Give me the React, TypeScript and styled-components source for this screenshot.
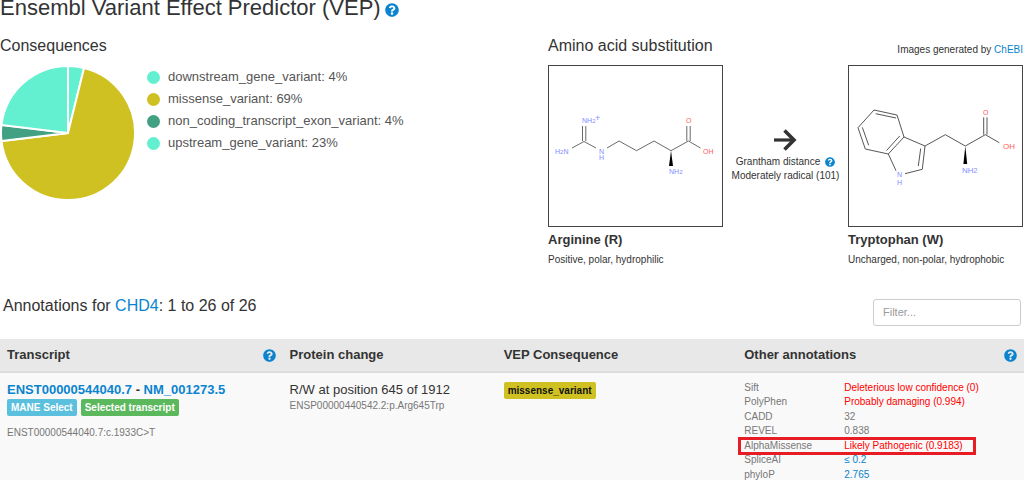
import React from "react";
import styled, { createGlobalStyle } from "styled-components";
import { FaQuestionCircle } from "react-icons/fa";

const GlobalStyle = createGlobalStyle`
  * { box-sizing: border-box; }
  body {
    margin: 0;
    background: #fff;
    color: #333;
    font-family: "Liberation Sans", Arial, sans-serif;
    font-size: 13px;
    line-height: 18px;
    overflow-x: hidden;
  }
  h1, h2, h3, p, ul, dl, dd { margin: 0; padding: 0; font-weight: 400; }
`;

const Link = styled.a`
  color: #0a84cf;
  text-decoration: none;
`;

const HelpButton = styled.button<{ $size: number }>`
  display: inline-flex;
  flex: none;
  padding: 0;
  border: 0;
  background: none;
  color: #0a84cf;
  font-size: ${(p) => p.$size}px;
  cursor: pointer;
`;

const Help = ({ size, label }: { size: number; label: string }) => (
  <HelpButton type="button" $size={size} aria-label={label}>
    <FaQuestionCircle />
  </HelpButton>
);

const Title = styled.h1`
  display: flex;
  align-items: center;
  gap: 4px;
  height: 20px;
  font-size: 22px;
  line-height: 16px;
  padding-bottom: 4px;
`;

const TitleHelp = styled.span`
  display: flex;
  padding-top: 4px;
`;

const Overview = styled.section`
  display: grid;
  grid-template-columns: 548fr 476fr;
  padding-top: 16px;
`;

const SectionHeading = styled.h2`
  font-size: 16px;
  line-height: 20px;
`;

const ChartRow = styled.div`
  display: flex;
  gap: 11px;
  padding-top: 10px;
`;

const Legend = styled.ul`
  list-style: none;
`;

const LegendItem = styled.li`
  display: flex;
  align-items: center;
  gap: 8px;
  height: 22px;
  color: #555;
`;

const Dot = styled.span<{ $color: string }>`
  width: 13px;
  height: 13px;
  border-radius: 50%;
  background: ${(p) => p.$color};
`;

const AminoHeader = styled.div`
  display: flex;
  justify-content: space-between;
  align-items: flex-end;
  height: 29px;
`;

const AminoHeading = styled(SectionHeading)`
  align-self: flex-start;
`;

const Credit = styled.p`
  font-size: 10px;
  line-height: 14px;
  padding: 0 1px 8px 0;
`;

const AminoRow = styled.div`
  display: flex;
  justify-content: space-between;
  padding-right: 1px;
`;

const AminoCard = styled.figure`
  margin: 0;
  width: 175px;
`;

const Frame = styled.div`
  height: 162px;
  border: 1px solid #444;

  svg { display: block; }
`;

const AminoName = styled.h3`
  padding-top: 4px;
  font-size: 13px;
  font-weight: 700;
  line-height: 18px;
`;

const AminoTraits = styled.p`
  padding-top: 3px;
  font-size: 10px;
  line-height: 16px;
`;

const Distance = styled.div`
  display: flex;
  flex-direction: column;
  align-items: center;
  padding-top: 63px;
  font-size: 10px;
  line-height: 14px;
`;

const DistanceLine = styled.span`
  display: flex;
  align-items: center;
  gap: 5px;
  white-space: nowrap;

  &:first-of-type { padding-top: 3px; }
`;

const Toolbar = styled.div`
  display: flex;
  justify-content: space-between;
  align-items: center;
  padding: 28px 3px 11px;
`;

const ListHeading = styled(SectionHeading)`
  padding-bottom: 12px;
`;

const FilterInput = styled.input`
  width: 148px;
  height: 27px;
  padding: 0 9px;
  border: 1px solid #ccc;
  border-radius: 3px;
  font: 11px "Liberation Sans", Arial, sans-serif;
  color: #555;

  &::placeholder { color: #999; }
`;

const Table = styled.table`
  width: 100%;
  table-layout: fixed;
  border-collapse: separate;
  border-spacing: 0;
  background: #f9f9f9;
`;

const Col = styled.col<{ $share: number }>`
  width: ${(p) => p.$share / 10}%;
`;

const HeadCell = styled.th`
  height: 34px;
  padding: 0 7px;
  background: #e8e8e8;
  border-bottom: 2px solid #ddd;
  text-align: left;
`;

const HeadContent = styled.div`
  display: flex;
  justify-content: space-between;
  align-items: center;
`;

const Cell = styled.td`
  padding: 8px 7px 0;
  vertical-align: top;
`;

const TranscriptTitle = styled.div`
  font-weight: 700;
`;

const Tags = styled.div`
  display: flex;
  gap: 4px;
`;

const Tag = styled.span<{ $bg: string; $fg?: string }>`
  display: inline-block;
  height: 17px;
  padding: 0 4px;
  border-radius: 2px;
  background: ${(p) => p.$bg};
  color: ${(p) => p.$fg ?? "#fff"};
  font-size: 10px;
  font-weight: 700;
  line-height: 17px;
`;

const Muted = styled.div<{ $gap?: number }>`
  padding-top: ${(p) => p.$gap ?? 0}px;
  color: #777;
  font-size: 10px;
  line-height: 14px;
`;

const Scores = styled.dl`
  font-size: 10px;
  color: #777;
`;

const Score = styled.div`
  position: relative;
  display: grid;
  grid-template-columns: 100px 1fr;
  height: 14px;
  line-height: 14px;
  white-space: nowrap;

  &:nth-child(even) { height: 15px; }
`;

const ScoreValue = styled.dd<{ $tone?: string }>`
  color: ${(p) => p.$tone ?? "inherit"};
`;

const Highlight = styled.span`
  position: absolute;
  top: -2px;
  left: -6px;
  width: 238px;
  height: 18px;
  border: 3px solid #e81c24;
`;

const AtomLabel = styled.text<{ $color: string }>`
  fill: ${(p) => p.$color};
  stroke: none;
  font-family: "Liberation Sans", Arial, sans-serif;
`;

const BLUE = "#7f8cff";
const RED = "#ff5a5a";
const MINT = "#62f0d0";
const MUSTARD = "#d0c122";
const GREEN = "#43a183";

const consequences = [
  { name: "downstream_gene_variant", count: 1, percent: 4, color: MINT },
  { name: "missense_variant", count: 18, percent: 69, color: MUSTARD },
  { name: "non_coding_transcript_exon_variant", count: 1, percent: 4, color: GREEN },
  { name: "upstream_gene_variant", count: 6, percent: 23, color: MINT },
];

const Pie = () => {
  const total = consequences.reduce((sum, c) => sum + c.count, 0);
  const point = (n: number) => {
    const a = (n / total) * 2 * Math.PI;
    return `${68 + 67 * Math.sin(a)} ${67 - 67 * Math.cos(a)}`;
  };
  let start = 0;
  return (
    <svg width="136" height="134" role="img" aria-label="Consequences pie chart">
      {consequences.map((c) => {
        const from = start;
        start += c.count;
        const large = c.count > total / 2 ? 1 : 0;
        return (
          <path
            key={c.name}
            d={`M68 67 L${point(from)} A67 67 0 ${large} 1 ${point(start)} Z`}
            fill={c.color}
            stroke="#fff"
            strokeWidth="2"
          />
        );
      })}
    </svg>
  );
};

interface AtomProps {
  x: number;
  y: number;
  text: string;
  color: string;
  size?: number;
}

/* Digits in an atom label are drawn smaller, as subscripts. */
const Atom = ({ x, y, text, color, size = 7 }: AtomProps) => (
  <AtomLabel x={x} y={y} $color={color} fontSize={size}>
    {text.split(/(\d)/).map((part, i) => (
      <tspan key={i} fontSize={/\d/.test(part) ? size - 1 : size}>
        {part}
      </tspan>
    ))}
  </AtomLabel>
);

const Arginine = () => (
  <svg width="173" height="160" viewBox="2 1 173 160" fill="none" stroke="#444" strokeWidth="0.8" role="img" aria-label="Arginine structure">
    <path d="M35.5 61V76M38.8 61V76M37 76.5L25 83M37 76.5L49 83M60 83L72 76L89.5 85.7L107 76L124 85.7L141.5 76L153.5 83M139.8 61V76M143.2 61V76" />
    <path d="M124 85.7L126 101H122Z" fill="#000" stroke="none" />
    <Atom x={35} y={58} text="NH2" color={BLUE} />
    <Atom x={48} y={56} text="+" color={BLUE} size={9} />
    <Atom x={8} y={89} text="H2N" color={BLUE} />
    <Atom x={52} y={89} text="N" color={BLUE} />
    <Atom x={52} y={95} text="H" color={BLUE} />
    <Atom x={139} y={58} text="O" color={RED} />
    <Atom x={156} y={89} text="OH" color={RED} />
    <Atom x={122} y={109} text="NH2" color={BLUE} />
  </svg>
);

const Tryptophan = () => (
  <svg width="173" height="160" viewBox="1 1 173 160" fill="none" stroke="#444" strokeWidth="0.9" role="img" aria-label="Tryptophan structure">
    <path d="M26 45L49 50L56 72L40.3 89L17.3 84L10 62.7ZM27.7 48.7L48 53M14.3 62.3L20.7 80.3M51.7 71L38.5 85.5" />
    <path d="M56 72L77 81L74.3 104.3L57 108.7M72.7 83.5L70.3 101M40.3 89L48 105.7M77 81L97.3 69.7L117.3 81L137.3 69.7L151.3 77.7M135.7 52.3V69.7M139 52.3V69.7" />
    <path d="M117.3 81L119.2 99H115.4Z" fill="#000" stroke="none" />
    <Atom x={49} y={112} text="N" color={BLUE} />
    <Atom x={49} y={120} text="H" color={BLUE} />
    <Atom x={135} y={50} text="O" color={RED} />
    <Atom x={155} y={84} text="OH" color={RED} size={8} />
    <Atom x={114} y={108} text="NH2" color={BLUE} size={8} />
  </svg>
);

const Arrow = () => (
  <svg width="24" height="24" viewBox="0 0 24 24" fill="none" stroke="#333" aria-hidden="true">
    <path d="M1 12H20" strokeWidth="3.2" />
    <path d="M11.5 2.5L21 12L11.5 21.5" strokeWidth="3.6" />
  </svg>
);

const scores = [
  { name: "Sift", value: "Deleterious low confidence (0)", tone: "#f00" },
  { name: "PolyPhen", value: "Probably damaging (0.994)", tone: "#f00" },
  { name: "CADD", value: "32" },
  { name: "REVEL", value: "0.838" },
  { name: "AlphaMissense", value: "Likely Pathogenic (0.9183)", tone: "#f00", highlighted: true },
  { name: "SpliceAI", value: "≤ 0.2", tone: "#0a84cf" },
  { name: "phyloP", value: "2.765", tone: "#0a84cf" },
];

export default function App() {
  return (
    <main>
      <GlobalStyle />
      <Title>
        Ensembl Variant Effect Predictor (VEP)
        <TitleHelp>
          <Help size={14} label="About VEP" />
        </TitleHelp>
      </Title>
      <Overview>
        <div>
          <SectionHeading>Consequences</SectionHeading>
          <ChartRow>
            <Pie />
            <Legend>
              {consequences.map((c) => (
                <LegendItem key={c.name}>
                  <Dot $color={c.color} />
                  {c.name}: {c.percent}%
                </LegendItem>
              ))}
            </Legend>
          </ChartRow>
        </div>
        <div>
          <AminoHeader>
            <AminoHeading>Amino acid substitution</AminoHeading>
            <Credit>
              Images generated by <Link href="#chebi">ChEBI</Link>
            </Credit>
          </AminoHeader>
          <AminoRow>
            <AminoCard>
              <Frame>
                <Arginine />
              </Frame>
              <AminoName>Arginine (R)</AminoName>
              <AminoTraits>Positive, polar, hydrophilic</AminoTraits>
            </AminoCard>
            <Distance>
              <Arrow />
              <DistanceLine>
                Grantham distance <Help size={10} label="About Grantham distance" />
              </DistanceLine>
              <DistanceLine>Moderately radical (101)</DistanceLine>
            </Distance>
            <AminoCard>
              <Frame>
                <Tryptophan />
              </Frame>
              <AminoName>Tryptophan (W)</AminoName>
              <AminoTraits>Uncharged, non-polar, hydrophobic</AminoTraits>
            </AminoCard>
          </AminoRow>
        </div>
      </Overview>
      <Toolbar>
        <ListHeading>
          Annotations for <Link href="#chd4">CHD4</Link>: 1 to 26 of 26
        </ListHeading>
        <FilterInput type="text" placeholder="Filter..." aria-label="Filter annotations" />
      </Toolbar>
      <Table>
        <colgroup>
          <Col $share={276} />
          <Col $share={209} />
          <Col $share={235} />
          <Col $share={280} />
        </colgroup>
        <thead>
          <tr>
            <HeadCell>
              <HeadContent>
                Transcript <Help size={13} label="About transcripts" />
              </HeadContent>
            </HeadCell>
            <HeadCell>Protein change</HeadCell>
            <HeadCell>VEP Consequence</HeadCell>
            <HeadCell>
              <HeadContent>
                Other annotations <Help size={13} label="About other annotations" />
              </HeadContent>
            </HeadCell>
          </tr>
        </thead>
        <tbody>
          <tr>
            <Cell>
              <TranscriptTitle>
                <Link href="#ENST00000544040.7">ENST00000544040.7</Link> - <Link href="#NM_001273.5">NM_001273.5</Link>
              </TranscriptTitle>
              <Tags>
                <Tag $bg="#5bc0de">MANE Select</Tag>
                <Tag $bg="#5cb85c">Selected transcript</Tag>
              </Tags>
              <Muted $gap={10}>ENST00000544040.7:c.1933C&gt;T</Muted>
            </Cell>
            <Cell>
              <div>R/W at position 645 of 1912</div>
              <Muted>ENSP00000440542.2:p.Arg645Trp</Muted>
            </Cell>
            <Cell>
              <Tag $bg={MUSTARD} $fg="#111">missense_variant</Tag>
            </Cell>
            <Cell>
              <Scores>
                {scores.map((s) => (
                  <Score key={s.name}>
                    <dt>{s.name}</dt>
                    <ScoreValue $tone={s.tone}>{s.value}</ScoreValue>
                    {s.highlighted && <Highlight />}
                  </Score>
                ))}
              </Scores>
            </Cell>
          </tr>
        </tbody>
      </Table>
    </main>
  );
}
